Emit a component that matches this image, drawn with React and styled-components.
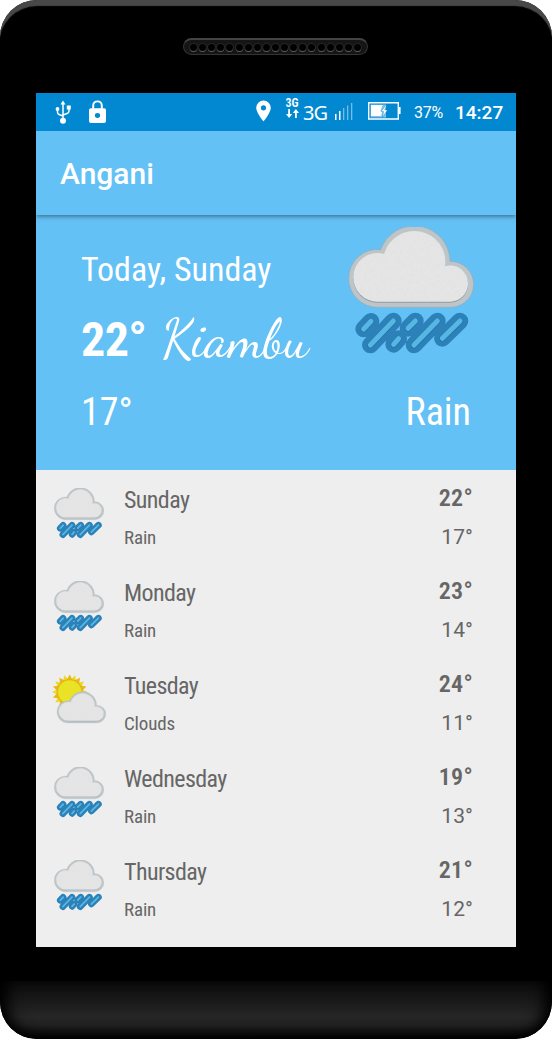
import React from "react";
import styled, { createGlobalStyle } from "styled-components";

const Global = createGlobalStyle`
  * { box-sizing: border-box; }
  body { margin: 0; background: #fff; font-family: Roboto, "Liberation Sans", sans-serif; }
`;

const Phone = styled.div`
  width: 552px;
  height: 1039px;
  border-radius: 37px;
  overflow: hidden;
  background: #000;
  display: flex;
  flex-direction: column;
  align-items: center;
  box-shadow: inset 0 7px 1px -1px #484848;
`;

const Earpiece = styled.div`
  width: 185px;
  height: 17px;
  margin: 38px 1px 0 0;
  flex: none;
  border-radius: 9px;
  border: 1px solid #333;
  border-top: 2px solid #444;
  background: #151515;
  display: flex;
  align-items: center;
  justify-content: space-between;
  padding: 1px 6px 0;
`;

const Hole = styled.i`
  width: 7px;
  height: 7px;
  border-radius: 50%;
  background: #000;
  box-shadow: 0 1px 0 0 #5c5c5c, 0 0 0 1px #262626;
`;

const Screen = styled.main`
  width: 480px;
  height: 854px;
  margin-top: 38px;
  flex: none;
  background: #eee;
  display: flex;
  flex-direction: column;
`;

const Chin = styled.div`
  width: 552px;
  height: 58px;
  margin-top: 34px;
  flex: none;
  border-radius: 0 0 37px 37px;
  background: linear-gradient(#0c0c0c 0, #151515 25%, #262626 62%, #202020 76%, #080808 94%, #000 100%);
  box-shadow: inset 13px 0 14px -5px #000, inset -13px 0 14px -5px #000;
`;

const StatusBar = styled.header`
  height: 38px;
  flex: none;
  background: #0288d1;
  color: #fff;
  display: flex;
  align-items: center;
  padding: 0 12px 0 18px;
`;

const StatusIcon = styled.svg`
  display: block;
  flex: none;
  margin-left: ${(p) => p.$gap || 0}px;
  margin-bottom: ${(p) => p.$lift || 0}px;
`;

const Spacer = styled.div`
  flex: 1;
`;

const Percent = styled.span`
  margin-left: 13px;
  width: 30px;
  font-size: 16px;
  line-height: 20px;
  letter-spacing: -0.2px;
  padding-top: 1px;
`;

const Clock = styled.span`
  margin-left: 11px;
  width: 49px;
  font-size: 19px;
  line-height: 22px;
  font-weight: 500;
  padding-top: 1px;
`;

const DataBadge = styled.div`
  width: 14px;
  margin-left: 14px;
  display: flex;
  flex-direction: column;
  align-items: center;
  font-size: 12px;
  font-stretch: 85%;
  line-height: 12px;
  font-weight: 600;
  padding-bottom: 9px;
`;

const Network = styled.span`
  margin-left: 4px;
  width: 26px;
  font: 20px/24px "Noto Sans", sans-serif;
  letter-spacing: -0.9px;
  padding-top: 1px;
`;

const AppBar = styled.div`
  height: 84px;
  flex: none;
  background: #64c1f5;
  box-shadow: 0 1px 5px rgba(0, 0, 0, 0.5);
  clip-path: inset(0 0 -8px 0);
  position: relative;
  z-index: 1;
  display: flex;
  align-items: center;
  padding: 2px 24px 0;
`;

const Title = styled.h1`
  margin: 0;
  font-size: 30px;
  line-height: 36px;
  font-weight: 500;
  color: #fff;
`;

const Hero = styled.section`
  height: 255px;
  flex: none;
  background: #64c1f5;
  color: #fff;
  display: flex;
  justify-content: space-between;
  padding: 12px 42px 0 45px;
`;

const Today = styled.div`
  display: flex;
  flex-direction: column;
  padding-top: 22px;
`;

const HeroSide = styled.div`
  display: flex;
  flex-direction: column;
  align-items: flex-end;
`;

const Text = styled.span`
  display: block;
  white-space: nowrap;
  font-size: ${(p) => p.$size}px;
  line-height: ${(p) => p.$line}px;
  font-weight: ${(p) => p.$weight || 400};
  font-stretch: ${(p) => (p.$wide ? "100%" : "75%")};
  letter-spacing: ${(p) => p.$track || 0}px;
  margin-top: ${(p) => p.$top || 0}px;
  padding-right: ${(p) => p.$end || 0}px;
`;

const TempLine = styled.div`
  display: flex;
  align-items: baseline;
  margin-top: 22px;
  height: 56px;
`;

const City = styled.span`
  margin-left: 15px;
  font-family: "Dancing Script", "Liberation Serif", cursive;
  font-size: 54px;
  line-height: 56px;
`;

const Days = styled.ul`
  list-style: none;
  margin: 0;
  padding: 0;
`;

const Day = styled.li`
  height: 93px;
  display: flex;
  color: #666;
  padding: 14px 43px 0 16px;
`;

const IconSlot = styled.div`
  width: 72px;
  display: flex;
  align-items: flex-start;
  padding: ${(p) => (p.$rain ? "4px 0 0 2px" : "5px 0 0 0")};
`;

const Labels = styled.div`
  flex: 1;
  display: flex;
  flex-direction: column;
  padding-top: 2px;
`;

const Temps = styled.div`
  display: flex;
  flex-direction: column;
  align-items: flex-end;
`;

const DROPS = "M101 356L123 333M121 404L190 332M191 402L206 385M234 354L256 332M252 404L322 332M337 384L390 332";
const CLOUD = "M142 291A86.500 86.500 0 0 1 56 204A86.500 86.500 0 0 1 152 118A107 107 0 0 1 360 153A69 69 0 0 1 431 222A69 69 0 0 1 362 291Z";
const CLOUD_IN = "M142 274A72.500 72.500 0 0 1 70 201A72.500 72.500 0 0 1 162 131A94 94 0 0 1 346 167A54 54 0 0 1 414 221A54 54 0 0 1 360 274Z";

function CloudShape({ id, small }) {
  return (
    <g>
      <filter id={id} x="-5%" y="-5%" width="110%" height="110%">
        <feTurbulence type="fractalNoise" baseFrequency="0.1" numOctaves="3" />
        <feColorMatrix values="0 0 0 0 .4  0 0 0 0 .4  0 0 0 0 .4  .12 0 0 0 -.03" />
        <feComposite in2="SourceGraphic" operator="in" />
        <feMerge>
          <feMergeNode in="SourceGraphic" />
          <feMergeNode />
        </feMerge>
      </filter>
      <path d={CLOUD} fill="#bdc5c9" stroke={small ? "#b4bdc2" : "#98a9b3"} strokeWidth="2" />
      <path d={CLOUD_IN} transform="translate(0 3)" fill="#949b9e" />
      <path d={CLOUD_IN} fill="#e6e6e6" stroke="#e6e6e6" strokeWidth={small ? 3 : 0} filter={`url(#${id})`} />
    </g>
  );
}

function RainIcon({ width, height, id }) {
  return (
    <svg width={width} height={height} viewBox="54 50 378 387" preserveAspectRatio="none">
      <CloudShape id={id} small={width < 100} />
      <g fill="none" strokeLinecap="round">
        <path d={DROPS} stroke="#2c82b8" strokeWidth="50" />
        <path d={DROPS} transform="translate(0 1)" stroke="#2373a6" strokeWidth="18" />
        <path d={DROPS} stroke="#57b7e4" strokeWidth="15" />
      </g>
    </svg>
  );
}

const rays = (offset) =>
  Array.from({ length: 10 }, (_, i) => {
    const at = (deg, r) => {
      const a = ((deg + offset + i * 36) * Math.PI) / 180;
      return `${(101 + r * Math.cos(a)).toFixed(1)} ${(96 + r * Math.sin(a)).toFixed(1)}`;
    };
    return `M${at(-15, 36)}L${at(0, 53)}L${at(15, 36)}Z`;
  }).join("");

function SunCloudIcon({ id }) {
  return (
    <svg width="55" height="49" viewBox="48 45 165 147">
      <path d={rays(0)} fill="#e9dc1d" />
      <path d={rays(18)} fill="#e9b81b" />
      <circle cx="101" cy="96" r="39" fill="#e6b31a" />
      <circle cx="101" cy="96" r="35" fill="#e9e225" />
      <g transform="translate(41 76.500) scale(.391 .386)">
        <CloudShape id={id} small />
      </g>
    </svg>
  );
}

const week = [
  ["Sunday", "Rain", 22, 17],
  ["Monday", "Rain", 23, 14],
  ["Tuesday", "Clouds", 24, 11],
  ["Wednesday", "Rain", 19, 13],
  ["Thursday", "Rain", 21, 12],
];

export default function App() {
  return (
    <>
      <Global />
      <Phone>
        <Earpiece>
          {Array.from({ length: 19 }, (_, i) => (
            <Hole key={i} />
          ))}
        </Earpiece>
        <Screen>
          <StatusBar>
            <StatusIcon width="18" height="24" viewBox="0 0 18 24" fill="none" stroke="#fff" strokeWidth="1.5">
              <path d="M9 3V20M3.500 9V12Q3.500 14 5 14.500L9 16M15 7V11Q15 13 13 13.500L9 15" />
              <path d="M9 .5L11.500 4.500H6.500Z" fill="#fff" stroke="none" />
              <circle cx="9" cy="20.700" r="3" fill="#fff" stroke="none" />
              <circle cx="3.500" cy="9" r="1.900" fill="#fff" stroke="none" />
              <path d="M12.800 5.500h4v4h-4z" fill="#fff" stroke="none" />
            </StatusIcon>
            <StatusIcon $gap={17} $lift={1} width="17" height="23" viewBox="0 0 17 24" preserveAspectRatio="none">
              <path fill="none" stroke="#fff" strokeWidth="2" d="M4.200 9V5.700a4.300 4.300 0 0 1 8.600 0V9" />
              <path fill="#fff" fillRule="evenodd" d="M2 8.500h13a2 2 0 0 1 2 2V22a2 2 0 0 1-2 2H2a2 2 0 0 1-2-2V10.500a2 2 0 0 1 2-2ZM8.500 13.600a2.600 2.600 0 1 0 0 5.200a2.600 2.600 0 1 0 0-5.200Z" />
            </StatusIcon>
            <Spacer />
            <StatusIcon $lift={2} width="15" height="22" viewBox="0 0 15 22">
              <path fill="#fff" fillRule="evenodd" d="M7.500 .5A7.300 7.300 0 0 0 .2 7.800C.2 13 7.500 21.500 7.500 21.500S14.800 13 14.800 7.800A7.300 7.300 0 0 0 7.500 .5ZM7.500 5.200a2.600 2.600 0 1 1 0 5.200a2.600 2.600 0 1 1 0-5.200Z" />
            </StatusIcon>
            <DataBadge>
              3G
              <StatusIcon width="13" height="9" viewBox="0 0 13 9" fill="#fff">
                <path d="M2.200 0H4V5H6.200L3.100 9L0 5H2.200ZM9 9H10.800V4H13L9.900 0L6.800 4H9Z" />
              </StatusIcon>
            </DataBadge>
            <Network>3G</Network>
            <StatusIcon $gap={6} $lift={2} width="18" height="18" viewBox="0 0 18 18" fill="#fff">
              <path d="M0 12h1.500v6H0zM4 9h1.500v9H4z" />
              <path opacity=".45" d="M8 6h1.300v12H8zM12 3.500h1.300V18H12zM16 1h1.300v17H16z" />
            </StatusIcon>
            <StatusIcon $gap={15} $lift={2} width="33" height="18" viewBox="0 0 33 18">
              <path fill="none" stroke="#fff" strokeWidth="1.400" d="M.7 .7H30.300V17H.7Z" />
              <path fill="#fff" opacity=".5" d="M2.500 2.500H18V15.500H2.500z" />
              <path fill="#fff" d="M31 5h1.600v7H31zM3 3h11.500l-2 6h2l-1.500 5H3z" />
              <path fill="#fff" stroke="#0288d1" strokeWidth=".5" d="M17.500 3.500l-4.500 6h2.500l-1 6l5-7.500h-2.700l1.700-4.500z" />
            </StatusIcon>
            <Percent>37%</Percent>
            <Clock>14:27</Clock>
          </StatusBar>
          <AppBar>
            <Title>Angani</Title>
          </AppBar>
          <Hero>
            <Today>
              <Text $size={34} $line={40}>Today, Sunday</Text>
              <TempLine>
                <Text $size={48} $line={56} $weight={700} $track={-0.6}>22°</Text>
                <City>Kiambu</City>
              </TempLine>
              <Text $size={38} $line={44} $top={23}>17°</Text>
            </Today>
            <HeroSide>
              <RainIcon width={126} height={129} id="grain-today" />
              <Text $size={38} $line={44} $top={34} $end={3}>Rain</Text>
            </HeroSide>
          </Hero>
          <Days>
            {week.map(([day, sky, high, low]) => (
              <Day key={day}>
                <IconSlot $rain={sky === "Rain"}>
                  {sky === "Rain" ? (
                    <RainIcon width={50} height={51} id={`grain-${day}`} />
                  ) : (
                    <SunCloudIcon id={`grain-${day}`} />
                  )}
                </IconSlot>
                <Labels>
                  <Text $size={24} $line={28} $track={-0.6}>{day}</Text>
                  <Text $size={19} $line={24} $top={12} $track={-0.15}>{sky}</Text>
                </Labels>
                <Temps>
                  <Text $size={24} $line={28} $weight={650} $track={0.3}>{high}°</Text>
                  <Text $size={21} $line={24} $top={13} $track={0.1} $wide>{low}°</Text>
                </Temps>
              </Day>
            ))}
          </Days>
        </Screen>
        <Chin />
      </Phone>
    </>
  );
}
